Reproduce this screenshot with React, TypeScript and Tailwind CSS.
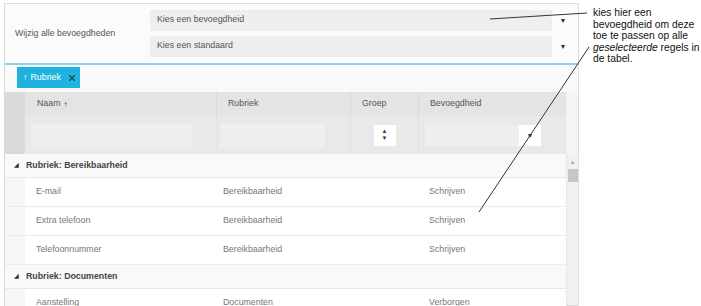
import { X } from 'lucide-react';

const rows = [
  { type: 'group', label: 'Rubriek: Bereikbaarheid' },
  { type: 'row', naam: 'E-mail', rubriek: 'Bereikbaarheid', bevoegdheid: 'Schrijven' },
  { type: 'row', naam: 'Extra telefoon', rubriek: 'Bereikbaarheid', bevoegdheid: 'Schrijven' },
  { type: 'row', naam: 'Telefoonnummer', rubriek: 'Bereikbaarheid', bevoegdheid: 'Schrijven' },
  { type: 'group', label: 'Rubriek: Documenten' },
  { type: 'row', naam: 'Aanstelling', rubriek: 'Documenten', bevoegdheid: 'Verborgen' },
];

function Caret() {
  return <span className="text-[7px] leading-none text-[#333]">▼</span>;
}

export default function App() {
  return (
    <div className="relative w-[701px] h-[306px] overflow-hidden bg-white flex font-['Liberation_Sans',Arial,sans-serif] text-[8.8px] text-[#555]">
      {/* panel */}
      <div className="ml-[4px] mt-[3px] w-[575px] shrink-0 border border-[#dcdcdc] bg-[#fbfbfb] flex flex-col">
        {/* bulk edit */}
        <div className="h-[61px] flex items-center border-b-2 border-[#86d6ef]">
          <div className="w-[145px] pl-[10px]">Wijzig alle bevoegdheden</div>
          <div className="flex flex-col gap-[5px] pb-[1px]">
            {['Kies een bevoegdheid', 'Kies een standaard'].map((t) => (
              <div key={t} className="flex items-center">
                <div className="w-[402px] h-[21px] bg-[#eeeeee] flex items-center pl-[7px]">{t}</div>
                <div className="w-[22px] flex justify-center">
                  <Caret />
                </div>
              </div>
            ))}
          </div>
        </div>

        {/* group-by chip */}
        <div className="h-[27px] flex items-start pl-[12px] pt-[2px] bg-[#f9f9f9]">
          <div className="h-[21px] w-[63px] bg-[#1eb4df] flex items-center pl-[6px] gap-[3px] text-white">
            <span className="text-[9px] font-bold">↑</span>
            <span>Rubriek</span>
            <X size={10} strokeWidth={2.6} className="text-[#21404c] ml-[3px]" />
          </div>
        </div>

        {/* header */}
        <div className="flex h-[24px] bg-[#e4e4e4] text-[#555]">
          <div className="w-[20px] bg-[#dadada]" />
          <div className="w-[192px] pl-[12px] flex items-center border-r border-[#d9d9d9]">
            Naam <span className="ml-[3px] text-[8px] text-[#333] mt-[2px]">↑</span>
          </div>
          <div className="w-[134px] pl-[11px] flex items-center border-r border-[#d9d9d9]">Rubriek</div>
          <div className="w-[68px] pl-[11px] flex items-center border-r border-[#d9d9d9]">Groep</div>
          <div className="w-[147px] pl-[11px] flex items-center">Bevoegdheid</div>
          <div className="flex-1 bg-[#f4f4f4]" />
        </div>

        {/* filter row */}
        <div className="flex h-[38px] bg-[#e9e9e9]">
          <div className="w-[20px] bg-[#dadada]" />
          <div className="w-[192px] flex items-center pl-[6px] pr-[24px] border-r border-[#e2e2e2]">
            <div className="w-full h-[23px] bg-[#efefef]" />
          </div>
          <div className="w-[134px] flex items-center pl-[4px] pr-[25px] border-r border-[#e2e2e2]">
            <div className="w-full h-[23px] bg-[#efefef]" />
          </div>
          <div className="w-[68px] flex items-center justify-center border-r border-[#e2e2e2]">
            <div className="w-[22px] h-[21px] bg-white flex flex-col items-center justify-center text-[6px] leading-[7px] text-[#333]">
              <span>▲</span>
              <span>▼</span>
            </div>
          </div>
          <div className="w-[147px] flex items-center pl-[6px] pr-[25px]">
            <div className="w-full h-[21px] bg-[#efefef] flex justify-end">
              <div className="w-[22px] h-full bg-white flex items-center justify-center">
                <Caret />
              </div>
            </div>
          </div>
          <div className="flex-1 bg-[#f4f4f4]" />
        </div>

        {/* body */}
        <div className="flex flex-1 min-h-0">
          <div className="w-[561px] flex flex-col">
            {rows.map((r, i) =>
              r.type === 'group' ? (
                <div key={i} className="h-[24px] shrink-0 flex items-center bg-[#f9f9f9] border-b border-[#e8e8e8] font-bold text-[#444]">
                  <span className="w-[21px] pl-[9px] text-[6px] text-[#333]">◢</span>
                  <span>{r.label}</span>
                </div>
              ) : (
                <div key={i} className="h-[29px] shrink-0 flex items-center bg-white border-b border-[#ececec] text-[#777]">
                  <div className="w-[20px] h-full bg-[#f7f7f7]" />
                  <div className="w-[192px] pl-[11px]">{r.naam}</div>
                  <div className="w-[134px] pl-[6px]">{r.rubriek}</div>
                  <div className="w-[68px]" />
                  <div className="w-[147px] pl-[10px]">{r.bevoegdheid}</div>
                </div>
              )
            )}
          </div>
          {/* scrollbar */}
          <div className="flex-1 bg-[#f1f1f1] border-l border-[#e6e6e6] flex flex-col items-center pt-[4px]">
            <span className="text-[6px] leading-[8px] text-[#aaa]">▲</span>
            <div className="mt-[3px] w-[10px] h-[13px] bg-[#c6c6c6]" />
          </div>
        </div>
      </div>

      {/* annotation */}
      <div className="ml-[14px] mt-[7px] text-[10.3px] leading-[11.5px] text-[#111] whitespace-nowrap">
        kies hier een
        <br />
        bevoegdheid om deze
        <br />
        toe te passen op alle
        <br />
        <i>geselecteerde</i> regels in
        <br />
        de tabel.
      </div>

      <svg className="absolute left-0 top-0 pointer-events-none" width="701" height="306">
        <line x1="490" y1="19" x2="587" y2="13" stroke="#333" strokeWidth="1" />
        <line x1="589" y1="47" x2="479" y2="212" stroke="#333" strokeWidth="1" />
      </svg>
    </div>
  );
}
